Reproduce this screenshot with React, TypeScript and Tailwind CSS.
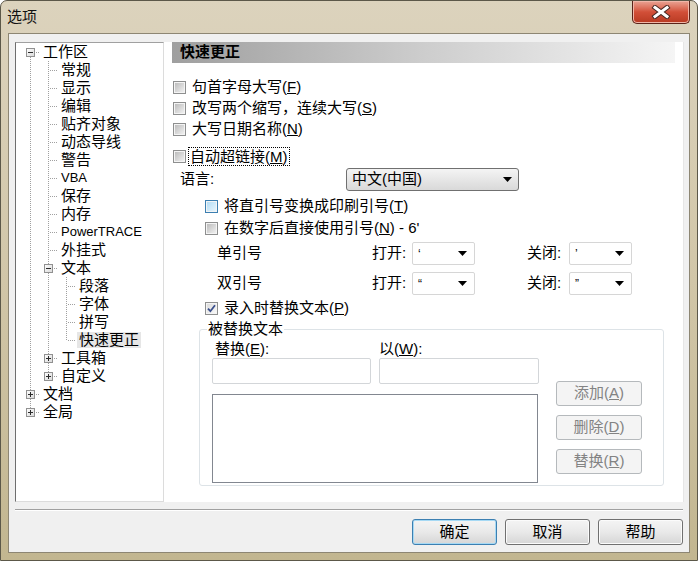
import React from "react";

type Guide = "pipe" | "tee" | "elbow" | "first";
type Row = {
  label: string;
  guides: Guide[];
  box?: "+" | "-";
  latin?: boolean;
  selected?: boolean;
};

const rows: Row[] = [
  { label: "工作区", guides: ["first"], box: "-" },
  { label: "常规", guides: ["pipe", "tee"] },
  { label: "显示", guides: ["pipe", "tee"] },
  { label: "编辑", guides: ["pipe", "tee"] },
  { label: "贴齐对象", guides: ["pipe", "tee"] },
  { label: "动态导线", guides: ["pipe", "tee"] },
  { label: "警告", guides: ["pipe", "tee"] },
  { label: "VBA", guides: ["pipe", "tee"], latin: true },
  { label: "保存", guides: ["pipe", "tee"] },
  { label: "内存", guides: ["pipe", "tee"] },
  { label: "PowerTRACE", guides: ["pipe", "tee"], latin: true },
  { label: "外挂式", guides: ["pipe", "tee"] },
  { label: "文本", guides: ["pipe", "tee"], box: "-" },
  { label: "段落", guides: ["pipe", "pipe", "tee"] },
  { label: "字体", guides: ["pipe", "pipe", "tee"] },
  { label: "拼写", guides: ["pipe", "pipe", "tee"] },
  { label: "快速更正", guides: ["pipe", "pipe", "elbow"], selected: true },
  { label: "工具箱", guides: ["pipe", "tee"], box: "+" },
  { label: "自定义", guides: ["pipe", "elbow"], box: "+" },
  { label: "文档", guides: ["tee"], box: "+" },
  { label: "全局", guides: ["elbow"], box: "+" },
];

// one 18px column of the tree connectors
function GuideCell({ kind, box }: { kind: Guide; box?: "+" | "-" }) {
  const c = "#a0a0a0";
  return (
    <svg width="18" height="18" className="block shrink-0">
      <defs>
        <linearGradient id="tb" x1="0" y1="0" x2="1" y2="1">
          <stop offset="0" stopColor="#ffffff" />
          <stop offset="1" stopColor="#d8d8d8" />
        </linearGradient>
      </defs>
      {(kind === "pipe" || kind === "tee") && (
        <line x1="9.5" y1="0" x2="9.5" y2="18" stroke={c} strokeDasharray="1 1" />
      )}
      {kind === "elbow" && (
        <line x1="9.5" y1="0" x2="9.5" y2="10" stroke={c} strokeDasharray="1 1" />
      )}
      {kind === "first" && (
        <line x1="9.5" y1="10" x2="9.5" y2="18" stroke={c} strokeDasharray="1 1" />
      )}
      {kind !== "pipe" && (
        <line x1="11" y1="9.5" x2="18" y2="9.5" stroke={c} strokeDasharray="1 1" />
      )}
      {box && (
        <g>
          <rect x="5.5" y="5.5" width="8" height="8" fill="url(#tb)" stroke="#919191" />
          <line x1="7" y1="9.5" x2="12" y2="9.5" stroke="#2b2b2b" />
          {box === "+" && <line x1="9.5" y1="7" x2="9.5" y2="12" stroke="#2b2b2b" />}
        </g>
      )}
    </svg>
  );
}

function Tree() {
  return (
    <div className="w-[149px] h-[460px] bg-white border border-[#dcdcdc] border-t-[#a0a0a0] border-l-[#6e6e6e] pl-[5px]">
      {rows.map((r) => (
        <div key={r.label} className="flex h-[18px] items-center">
          {r.guides.map((g, i) => (
            <GuideCell key={i} kind={g} box={i === r.guides.length - 1 ? r.box : undefined} />
          ))}
          <span
            className={
              "ml-[2px] px-[2px] h-[16px] whitespace-nowrap flex items-center " +
              (r.latin ? "text-[13px] " : "text-[15px] ") +
              (r.selected ? "bg-[#e6e6e6]" : "")
            }
          >
            {r.label}
          </span>
        </div>
      ))}
    </div>
  );
}

function Check({ checked, hover }: { checked?: boolean; hover?: boolean }) {
  return (
    <span
      className={
        "w-[13px] h-[13px] shrink-0 border flex items-center justify-center bg-[#f4f4f4] " +
        (hover ? "border-[#3c7fb1]" : "border-[#8e8f8f]")
      }
    >
      <span
        className={
          "w-[9px] h-[9px] flex items-center justify-center " +
          (hover
            ? "bg-linear-to-br from-[#b4ddf5] to-[#e6f4fc]"
            : checked
            ? "bg-linear-to-br from-[#dcdcdc] to-[#f8f8f8]"
            : "bg-linear-to-br from-[#bdbdbd] to-[#f0f0f0]")
        }
      >
        {checked && (
          <svg width="9" height="9" viewBox="0 0 9 9" className="block">
            <path d="M1 4.6 L3.4 7.2 L8 1.2" fill="none" stroke="#3a4f8c" strokeWidth="1.8" />
          </svg>
        )}
      </span>
    </span>
  );
}

function Arrow() {
  return (
    <svg width="9" height="5" viewBox="0 0 9 5" className="block shrink-0">
      <path d="M0 0 H9 L4.5 5 Z" fill="#000" />
    </svg>
  );
}

function Combo({ value }: { value: string }) {
  return (
    <div className="w-[63px] h-[23px] border border-[#d6d6d6] rounded-[2px] bg-white flex items-center justify-between pl-[5px] pr-[7px]">
      <span className="text-[12px] leading-none">{value}</span>
      <Arrow />
    </div>
  );
}

function SideButton({ children }: { children: React.ReactNode }) {
  return (
    <div className="w-[86px] h-[25px] border border-[#b5b9bc] rounded-[3px] bg-[#f4f4f4] text-[#838383] flex items-center justify-center">
      {children}
    </div>
  );
}

function DialogButton({ children, primary }: { children: React.ReactNode; primary?: boolean }) {
  return (
    <div
      className={
        "w-[85px] h-[26px] rounded-[3px] border flex items-center justify-center bg-linear-to-b from-[#f4f4f4] via-[#e9e9e9] to-[#d6d6d6] " +
        (primary ? "border-[#3c7fb1] shadow-[inset_0_0_0_1px_#a6d9f4]" : "border-[#707070] shadow-[inset_0_0_0_1px_#fbfbfb]")
      }
    >
      {children}
    </div>
  );
}

function QuickCorrect() {
  return (
    <div className="w-[520px] h-[460px] bg-white border-r border-[#e6e6e6] flex flex-col">
      {/* Header */}
      <div className="ml-[8px] w-[503px] h-[21px] bg-linear-to-r from-[#9f9f9f] via-[#cdcdcd] to-[#f5f5f5] flex items-center pl-[8px] font-bold text-[15px]">
        快速更正
      </div>
      <div className="pl-[9px] flex flex-col">
        <div className="mt-[14px] h-[21px] flex items-center gap-[6px]">
          <Check />
          <span>句首字母大写(<u>F</u>)</span>
        </div>
        <div className="h-[21px] flex items-center gap-[6px]">
          <Check />
          <span>改写两个缩写，连续大写(<u>S</u>)</span>
        </div>
        <div className="h-[21px] flex items-center gap-[6px]">
          <Check />
          <span>大写日期名称(<u>N</u>)</span>
        </div>
        <div className="mt-[5px] h-[22px] flex items-center gap-[2px]">
          <Check />
          <span className="border border-dotted border-black px-[1px] leading-[17px]">
            自动超链接(<u>M</u>)
          </span>
        </div>
        {/* Language */}
        <div className="mt-[1px] h-[23px] flex items-center">
          <span className="ml-[7px] w-[166px]">语言:</span>
          <div className="w-[173px] h-[23px] border border-[#707070] rounded-[3px] bg-linear-to-b from-[#f4f4f4] to-[#d9d9d9] flex items-center justify-between pl-[5px] pr-[6px]">
            <span>中文(中国)</span>
            <Arrow />
          </div>
        </div>
        <div className="ml-[32px] mt-[4px] h-[22px] flex items-center gap-[6px]">
          <Check hover />
          <span>将直引号变换成印刷引号(<u>T</u>)</span>
        </div>
        <div className="ml-[32px] h-[22px] flex items-center gap-[6px]">
          <Check />
          <span>在数字后直接使用引号(<u>N</u>) - 6'</span>
        </div>
        {/* Quotes */}
        <div className="ml-[44px] mt-[3px] h-[23px] flex items-center">
          <span className="w-[155px]">单引号</span>
          <span className="w-[40px]">打开:</span>
          <Combo value="‘" />
          <span className="ml-[52px] w-[42px]">关闭:</span>
          <Combo value="’" />
        </div>
        <div className="ml-[44px] mt-[7px] h-[23px] flex items-center">
          <span className="w-[155px]">双引号</span>
          <span className="w-[40px]">打开:</span>
          <Combo value="“" />
          <span className="ml-[52px] w-[42px]">关闭:</span>
          <Combo value="”" />
        </div>
        <div className="ml-[32px] mt-[2px] h-[22px] flex items-center gap-[6px]">
          <Check checked />
          <span>录入时替换文本(<u>P</u>)</span>
        </div>
        {/* Replace group */}
        <fieldset className="ml-[26px] mt-[1px] w-[465px] border border-[#dde3e7] rounded-[3px]">
          <legend className="ml-[7px] px-[1px] leading-[18px]">被替换文本</legend>
          <div className="flex items-end pl-[12px] pb-[2px]">
            <div className="w-[327px] flex flex-col">
              <div className="mt-[2px] h-[18px] flex items-center">
                <span className="w-[167px] pl-[3px]">替换(<u>E</u>):</span>
                <span>以(<u>W</u>):</span>
              </div>
              <div className="flex gap-[8px]">
                <div className="w-[159px] h-[26px] border border-[#d3d6d9] rounded-[2px] bg-white" />
                <div className="w-[160px] h-[26px] border border-[#d3d6d9] rounded-[2px] bg-white" />
              </div>
              <div className="mt-[10px] w-[326px] h-[89px] border border-[#828790] bg-white" />
            </div>
            <div className="ml-[17px] mb-[9px] flex flex-col gap-[9px]">
              <SideButton>添加(<u>A</u>)</SideButton>
              <SideButton>删除(<u>D</u>)</SideButton>
              <SideButton>替换(<u>R</u>)</SideButton>
            </div>
          </div>
        </fieldset>
      </div>
    </div>
  );
}

export default function App() {
  return (
    <div className="w-[698px] h-[561px] flex flex-col rounded-t-[7px] border border-[#5c5849] bg-linear-to-b from-[#dcd3bd] via-[#d1c6a8] to-[#c2b690] text-[15px] text-black font-['Liberation_Sans','Noto_Sans_CJK_SC',sans-serif] overflow-hidden">
      {/* Title bar */}
      <div className="h-[32px] flex items-start justify-between">
        <span className="ml-[6px] mt-[6px] text-[15px] leading-[20px] text-[#111]">选项</span>
        <div className="mr-[7px] w-[58px] h-[23px] rounded-b-[5px] border border-t-0 border-[#5a2319] bg-linear-to-b from-[#e9a394] via-[#d24f38] to-[#b83a22] shadow-[inset_0_0_0_1px_#f0b6a8] flex items-center justify-center">
          <svg width="20" height="14" viewBox="0 0 20 14" className="block">
            <path d="M4 2.5 L16 11.5 M16 2.5 L4 11.5" stroke="#4a2a24" strokeWidth="5" strokeLinecap="square" />
            <path d="M4 2.5 L16 11.5 M16 2.5 L4 11.5" stroke="#ffffff" strokeWidth="3" strokeLinecap="square" />
          </svg>
        </div>
      </div>
      {/* Client area */}
      <div className="mx-[7px] mb-[7px] flex-1 border border-[#8d8673] bg-[#f0f0f0] flex flex-col">
        <div className="flex pl-[6px] pt-[8px]">
          <Tree />
          <QuickCorrect />
        </div>
        <div className="mx-[6px] mt-[7px] border-t border-[#a0a0a0] border-b border-b-white" />
        <div className="mt-[8px] flex justify-end gap-[8px] pr-[6px]">
          <DialogButton primary>确定</DialogButton>
          <DialogButton>取消</DialogButton>
          <DialogButton>帮助</DialogButton>
        </div>
      </div>
    </div>
  );
}
